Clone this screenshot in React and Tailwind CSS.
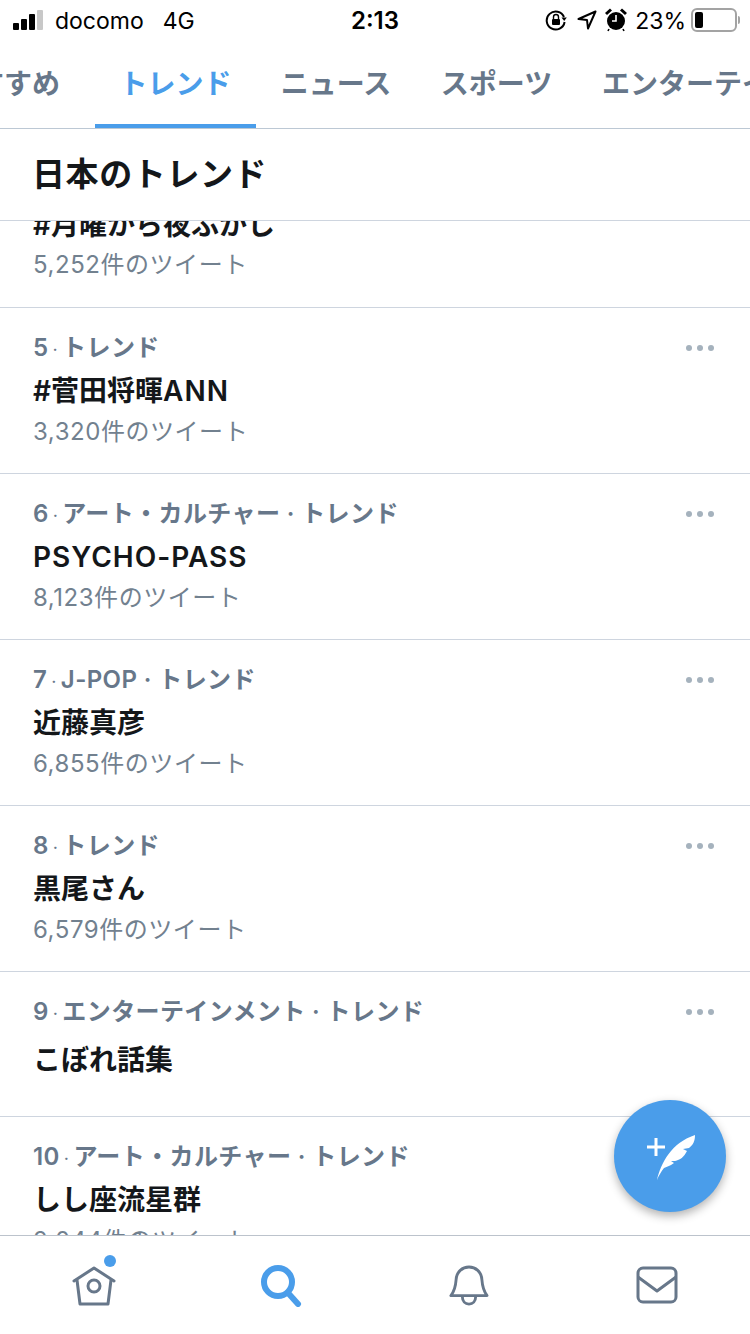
import React from 'react'

const font = { fontFamily: 'Inter, "Noto Sans CJK JP", sans-serif' }

const trends = [
    { meta: '5', topic: 'トレンド', title: <>#菅田将暉<span className="tracking-[1px]">ANN</span></>, count: '3,320件のツイート' },
    { meta: '6', topic: 'アート・カルチャー · トレンド', title: <span className="tracking-[1px]">PSYCHO-PASS</span>, count: '8,123件のツイート' },
    { meta: '7', topic: 'J-POP · トレンド', title: '近藤真彦', count: '6,855件のツイート' },
    { meta: '8', topic: 'トレンド', title: '黒尾さん', count: '6,579件のツイート' },
]

const More = () => (
    <div className="absolute right-[36px] top-[37px] flex gap-[5px]">
        <span className="w-[6px] h-[6px] rounded-full bg-[#a5b2bd]"></span>
        <span className="w-[6px] h-[6px] rounded-full bg-[#a5b2bd]"></span>
        <span className="w-[6px] h-[6px] rounded-full bg-[#a5b2bd]"></span>
    </div>
)

const Meta = ({ n, topic }) => (
    <div className="text-[24px] leading-[32px] font-semibold text-[#67778a] whitespace-nowrap tracking-[0.4px]">
        {n}<span className="font-normal text-[18px] mx-[4px]">·</span>{topic}
    </div>
)

const Row = ({ meta, topic, title, count }) => (
    <div className="relative h-[166px] border-b border-[#ced5df] pl-[33px] pt-[24px]">
        <More />
        <Meta n={meta} topic={topic} />
        <div className="mt-[6px] text-[28px] leading-[38px] font-semibold text-[#14171a]">{title}</div>
        <div className="mt-[6px] text-[24px] leading-[32px] text-[#72818f] tracking-[0.55px]">{count}</div>
    </div>
)

const StatusBar = () => (
    <div className="h-[40px] shrink-0 flex items-center justify-between relative text-black">
        <div className="flex items-center pl-[13px]">
            <div className="flex items-end gap-[2px] h-[20px]">
                <span className="w-[6px] h-[7px] rounded-[1px] bg-black"></span>
                <span className="w-[6px] h-[11px] rounded-[1px] bg-black"></span>
                <span className="w-[6px] h-[16px] rounded-[1px] bg-black"></span>
                <span className="w-[6px] h-[20px] rounded-[1px] bg-[#c8c8c8]"></span>
            </div>
            <span className="ml-[12px] text-[23px] leading-none pt-[2px]">docomo</span>
            <span className="ml-[19px] text-[23px] leading-none pt-[2px]">4G</span>
        </div>
        <div className="absolute left-0 right-0 text-center text-[24px] font-semibold leading-none pt-[2px]">2:13</div>
        <div className="flex items-center pr-[10px]">
            <svg width="22" height="22" viewBox="0 0 22 22" fill="none" stroke="black" strokeWidth="2">
                <path d="M19 8 A9 9 0 1 0 19.6 13" />
                <path d="M16.5 8.5 L21.8 8.5 L19.2 12 Z" fill="black" stroke="none" />
                <rect x="7" y="10" width="8" height="6" rx="1" fill="black" stroke="none" />
                <path d="M8.5 10 V8 a2.5 2.5 0 0 1 5 0 V10" strokeWidth="1.4" />
            </svg>
            <svg className="ml-[10px]" width="20" height="20" viewBox="0 0 20 20" fill="none" stroke="black" strokeWidth="2" strokeLinejoin="round">
                <path d="M18.5 1.5 L1.5 9 L10 10 L11 18.5 Z" />
            </svg>
            <svg className="ml-[8px]" width="22" height="24" viewBox="0 0 22 24">
                <circle cx="11" cy="13" r="9" fill="black" />
                <path d="M11 7 V13 H7" stroke="white" strokeWidth="1.6" fill="none" />
                <path d="M1 6 L6 1.5 M21 6 L16 1.5" stroke="black" strokeWidth="3" />
                <path d="M4 21 L3 23 M18 21 L19 23" stroke="black" strokeWidth="1.6" />
            </svg>
            <span className="ml-[8px] text-[23px] leading-none pt-[2px]">23%</span>
            <div className="ml-[5px] w-[46px] h-[24px] rounded-[6px] border-2 border-[#a3a3a3] p-[2px] flex">
                <span className="w-[8px] h-full rounded-[2px] bg-black"></span>
            </div>
            <span className="ml-[1px] w-[2px] h-[8px] rounded-r bg-[#a3a3a3]"></span>
        </div>
    </div>
)

const Tabs = () => (
    <div className="h-[89px] shrink-0 border-b border-[#bcc8d4] overflow-hidden text-[28px] font-semibold text-[#67778a]">
        <div className="flex whitespace-nowrap h-[88px]">
            <div className="w-[95px] shrink-0 flex justify-end pr-[35px] pt-[24px] leading-[40px]">おすすめ</div>
            <div className="w-[161px] shrink-0 pt-[24px] leading-[40px] text-center text-[#4a9dea] border-b-4 border-[#4a9dea]">トレンド</div>
            <div className="w-[160px] shrink-0 pt-[24px] leading-[40px] text-center">ニュース</div>
            <div className="w-[161px] shrink-0 pt-[24px] leading-[40px] text-center">スポーツ</div>
            <div className="shrink-0 pl-[25px] pt-[24px] leading-[40px]">エンターテインメント</div>
        </div>
    </div>
)

const TabBar = () => (
    <div className="h-[99px] shrink-0 border-t border-[#bcc3cc] bg-white relative z-10 grid grid-cols-4 pt-[29px]">
        <div className="flex justify-center">
            <svg width="46" height="42" viewBox="0 0 46 42" fill="none" stroke="#67778a" strokeWidth="3" strokeLinejoin="round">
                <path d="M3 16 L23 3 L43 16" strokeLinecap="round" />
                <path d="M6 15 L9 39 H37 L40 15" />
                <circle cx="23" cy="21" r="6" />
            </svg>
        </div>
        <div className="flex justify-center">
            <svg width="44" height="44" viewBox="0 0 44 44" fill="none" stroke="#4a9dea" className="-mt-[2px] ml-[2px]">
                <circle cx="18" cy="19" r="14" strokeWidth="6" />
                <path d="M29 31 L38 41" strokeWidth="6" strokeLinecap="round" />
            </svg>
        </div>
        <div className="flex justify-center">
            <svg width="40" height="44" viewBox="0 0 42 46" fill="none" stroke="#67778a" strokeWidth="3" strokeLinecap="round" strokeLinejoin="round" className="ml-[1px]">
                <path d="M2 32 H40 C36 27 35 22 34.5 15 C34 7 28 2 21 2 C14 2 8 7 7.5 15 C7 22 6 27 2 32 Z" />
                <path d="M14 33 C14 38 17 41 21 41 C25 41 28 38 28 33" />
            </svg>
        </div>
        <div className="flex justify-center">
            <svg width="42" height="40" viewBox="0 0 42 40" fill="none" stroke="#67778a" strokeWidth="3" strokeLinejoin="round" className="mt-[1px] ml-[1px]">
                <rect x="2" y="2" width="38" height="34" rx="5" />
                <path d="M2 11 L21 25 L40 11" />
            </svg>
        </div>
        <span className="absolute left-[104px] top-[19px] w-[12px] h-[12px] rounded-full bg-[#4a9dea]"></span>
    </div>
)

export default function App() {
    return (
        <div className="relative w-[750px] h-[1334px] bg-white overflow-hidden flex flex-col" style={font}>
            <StatusBar />
            <Tabs />
            <div className="h-[92px] shrink-0 border-b border-[#ced5df] pl-[32px] pt-[21px] bg-white relative z-10">
                <div className="text-[33px] leading-[48px] font-bold text-[#14171a] tracking-[0.6px]">日本のトレンド</div>
            </div>
            <div className="flex-1 overflow-hidden">
                <div className="-mt-[15px] h-[102px] border-b border-[#ced5df] pl-[33px]">
                    <div className="text-[28px] leading-[38px] font-semibold text-[#14171a]">#月曜から夜ふかし</div>
                    <div className="mt-[5px] text-[24px] leading-[32px] text-[#72818f] tracking-[0.55px]">5,252件のツイート</div>
                </div>
                {trends.map((t) => (
                    <Row key={t.meta} {...t} />
                ))}
                <div className="relative h-[145px] border-b border-[#ced5df] pl-[33px] pt-[24px]">
                    <More />
                    <Meta n="9" topic="エンターテインメント · トレンド" />
                    <div className="mt-[11px] text-[28px] leading-[38px] font-semibold text-[#14171a]">こぼれ話集</div>
                </div>
                <div className="pl-[33px] pt-[24px]">
                    <Meta n="10" topic="アート・カルチャー · トレンド" />
                    <div className="mt-[6px] text-[28px] leading-[38px] font-semibold text-[#14171a]">しし座流星群</div>
                    <div className="mt-[6px] text-[24px] leading-[32px] text-[#72818f] tracking-[0.55px]">2,044件のツイート</div>
                </div>
            </div>
            <TabBar />
            <button className="absolute left-[614px] top-[1100px] w-[112px] h-[112px] rounded-full bg-[#4a9dea] shadow-[0_4px_10px_rgba(0,0,0,0.3)] z-20 flex items-center justify-center">
                <svg width="60" height="56" viewBox="0 0 60 56" fill="white">
                    <path d="M16 10 V28 M7 19 H25" stroke="white" strokeWidth="3" fill="none" />
                    <path d="M17 52 C21 35 31 15 55 7 C55 13 53 17 49 20 L43 21 L47 23 C44 29 40 32 35 33 L31 33 L34 35 C30 38 26 39 24 40 C21 44 19 47 17 52 Z" />
                </svg>
            </button>
        </div>
    )
}
